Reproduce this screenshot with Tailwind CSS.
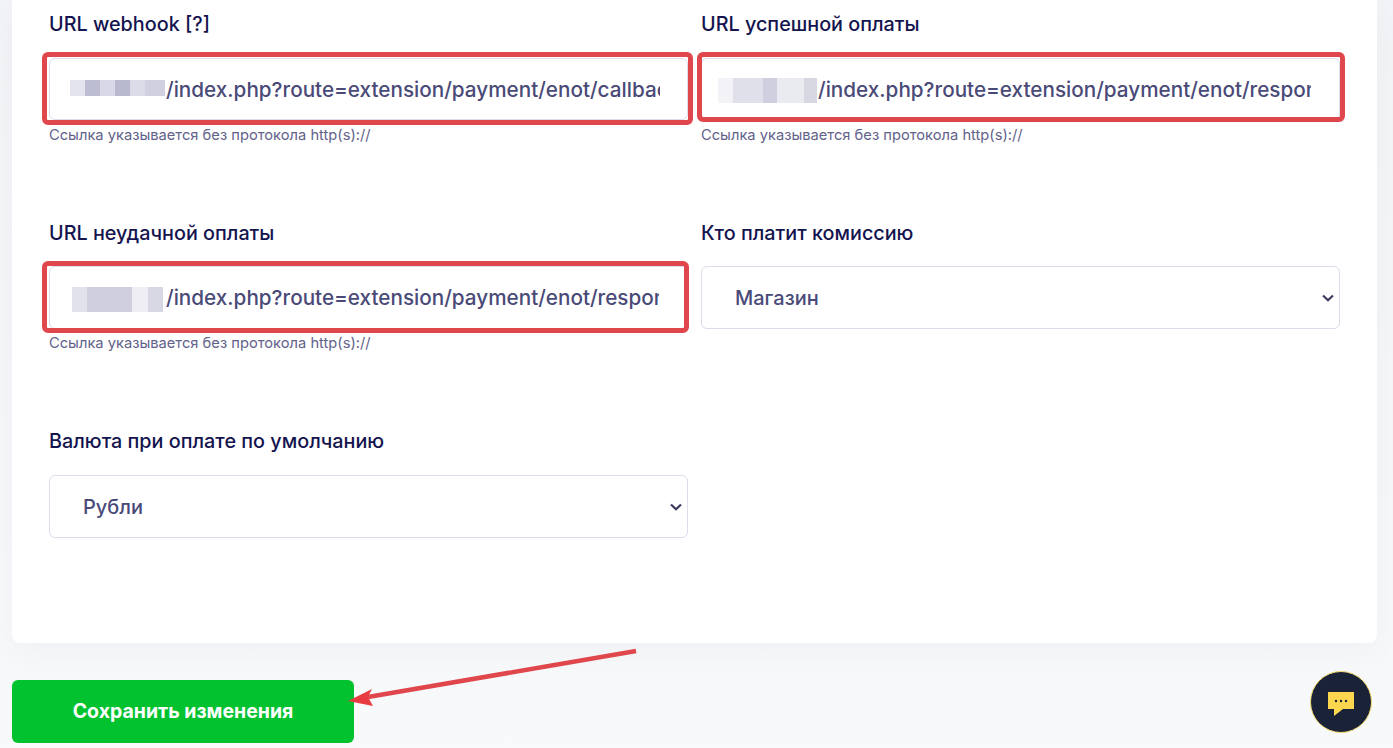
<!DOCTYPE html>
<html lang="ru">
<head>
<meta charset="utf-8">
<title>Настройки</title>
<script src="https://cdn.jsdelivr.net/npm/@tailwindcss/browser@4"></script>
</head>
<body class="relative h-[748px] w-[1393px] overflow-hidden bg-gradient-to-b from-[#f1f3f6] to-[#f8f9fa] font-['Inter','Noto_Sans',sans-serif]">
    <div class="pr-4 pl-3">
        <form class="h-[643px] rounded-b-lg bg-white px-[37px] pt-[12px] shadow-[0_10px_30px_rgba(30,40,80,0.03)]">
            <div class="grid grid-cols-2 gap-x-[13px]">
                <!-- URL webhook -->
                <div class="h-[209px]">
                    <label class="block text-[19.8px] leading-[24px] font-medium text-[#14144f]">URL webhook [?]</label>
                    <div class="relative mt-[22px]">
                        <input type="text" value="/index.php?route=extension/payment/enot/callback" class="h-[62px] w-full rounded-md border border-[#dcdcec] bg-white pr-[27px] pl-[116px] text-[20.7px] font-[550] text-[#4a4a78] outline-none">
                        <div class="absolute top-[22px] left-[21px] flex h-[16px] w-[95px]">
                            <span class="w-[15px] bg-[#e4e4ee]"></span>
                            <span class="w-[15px] bg-[#bcbcd2]"></span>
                            <span class="w-[15px] bg-[#d8d8e6]"></span>
                            <span class="w-[15px] bg-[#b8b8ce]"></span>
                            <span class="w-[15px] bg-[#dcdce8]"></span>
                            <span class="w-[20px] bg-[#d0d0e0]"></span>
                        </div>
                        <div class="absolute -top-[6px] -right-[5px] -bottom-[5px] -left-[7px] rounded-md border-[5px] border-[#e0474c]"></div>
                    </div>
                    <p class="mt-[7px] text-[14.7px] leading-[16px] text-[#62628a]">Ссылка указывается без протокола http(s)://</p>
                </div>

                <!-- URL успешной оплаты -->
                <div class="h-[209px]">
                    <label class="block text-[19.8px] leading-[24px] font-medium text-[#14144f]">URL успешной оплаты</label>
                    <div class="relative mt-[22px]">
                        <input type="text" value="/index.php?route=extension/payment/enot/response" class="h-[62px] w-full rounded-md border border-[#dcdcec] bg-white pr-[28px] pl-[116px] text-[20.7px] font-[550] text-[#4a4a78] outline-none">
                        <div class="absolute top-[20px] left-[17px] flex h-[25px] w-[99px]">
                            <span class="w-[15px] bg-[#f3f3f7]"></span>
                            <span class="w-[30px] bg-[#e0e0ea]"></span>
                            <span class="w-[14px] bg-[#cfcfdf]"></span>
                            <span class="w-[27px] bg-[#eaeaf1]"></span>
                            <span class="w-[13px] bg-[#d8d8e3]"></span>
                        </div>
                        <div class="absolute -top-[6px] -right-[5px] -bottom-[2px] -left-[4px] rounded-md border-[5px] border-[#e0474c]"></div>
                    </div>
                    <p class="mt-[7px] text-[14.7px] leading-[16px] text-[#62628a]">Ссылка указывается без протокола http(s)://</p>
                </div>

                <!-- URL неудачной оплаты -->
                <div class="h-[208px]">
                    <label class="block text-[19.8px] leading-[24px] font-medium text-[#14144f]">URL неудачной оплаты</label>
                    <div class="relative mt-[21px]">
                        <input type="text" value="/index.php?route=extension/payment/enot/response" class="h-[63px] w-full rounded-md border border-[#dcdcec] bg-white pr-[28px] pl-[116px] text-[20.7px] font-[550] text-[#4a4a78] outline-none">
                        <div class="absolute top-[21px] left-[23px] flex h-[25px] w-[91px]">
                            <span class="w-[15px] bg-[#e2e2ec]"></span>
                            <span class="w-[45px] bg-[#cfcfe0]"></span>
                            <span class="w-[16px] bg-[#eeeef4]"></span>
                            <span class="w-[15px] bg-[#d8d8e5]"></span>
                        </div>
                        <div class="absolute -top-[5px] -right-[1px] -bottom-[4px] -left-[7px] rounded-md border-[5px] border-[#e0474c]"></div>
                    </div>
                    <p class="mt-[6px] text-[14.7px] leading-[16px] text-[#62628a]">Ссылка указывается без протокола http(s)://</p>
                </div>

                <!-- Кто платит комиссию -->
                <div class="h-[208px]">
                    <label class="block text-[19.8px] leading-[24px] font-medium text-[#14144f]">Кто платит комиссию</label>
                    <div class="relative mt-[21px]">
                        <select class="h-[63px] w-full appearance-none rounded-md border border-[#dcdcec] bg-white px-[33px] text-xl font-[550] text-[#4a4a78] outline-none">
                            <option>Магазин</option>
                        </select>
                        <svg class="pointer-events-none absolute top-[28px] right-[6px]" width="12" height="8" viewBox="0 0 12 8">
                            <path d="M1 1.5 L6 6.3 L11 1.5" stroke="#3c3c60" stroke-width="2.2" fill="none"/>
                        </svg>
                    </div>
                </div>

                <!-- Валюта -->
                <div>
                    <label class="block text-[19.8px] leading-[24px] font-medium text-[#14144f]">Валюта при оплате по умолчанию</label>
                    <div class="relative mt-[22px]">
                        <select class="h-[63px] w-full appearance-none rounded-md border border-[#dcdcec] bg-white px-[33px] text-xl font-[550] text-[#4a4a78] outline-none">
                            <option>Рубли</option>
                        </select>
                        <svg class="pointer-events-none absolute top-[28px] right-[6px]" width="12" height="8" viewBox="0 0 12 8">
                            <path d="M1 1.5 L6 6.3 L11 1.5" stroke="#3c3c60" stroke-width="2.2" fill="none"/>
                        </svg>
                    </div>
                </div>
            </div>
        </form>

        <button type="button" class="mt-[37px] h-[63px] w-[342px] rounded-md bg-[#02c22f] text-[19.5px] font-bold text-white">Сохранить изменения</button>
    </div>

    <!-- annotation arrow -->
    <svg class="absolute top-[645px] left-[340px]" width="300" height="65" viewBox="0 0 300 65">
        <path d="M296 6 L28 52" stroke="#e0474c" stroke-width="4.5" fill="none"/>
        <path d="M8 56 L32 44 L28 52 L33 61 Z" fill="#e93c40"/>
    </svg>

    <!-- chat button -->
    <div class="absolute top-[671px] left-[1310px] flex h-[62px] w-[62px] items-center justify-center rounded-full border border-[#f5dc6e] bg-[#1a2238]">
        <svg width="28" height="30" viewBox="0 0 28 30">
            <path d="M1 5 H27 V22 H16 L7 29 V22 H1 Z" fill="#fdd64f"/>
            <circle cx="9" cy="14" r="1.2" fill="#1a2238"/>
            <circle cx="14" cy="14" r="1.2" fill="#1a2238"/>
            <circle cx="19" cy="14" r="1.2" fill="#1a2238"/>
        </svg>
    </div>
</body>
</html>
